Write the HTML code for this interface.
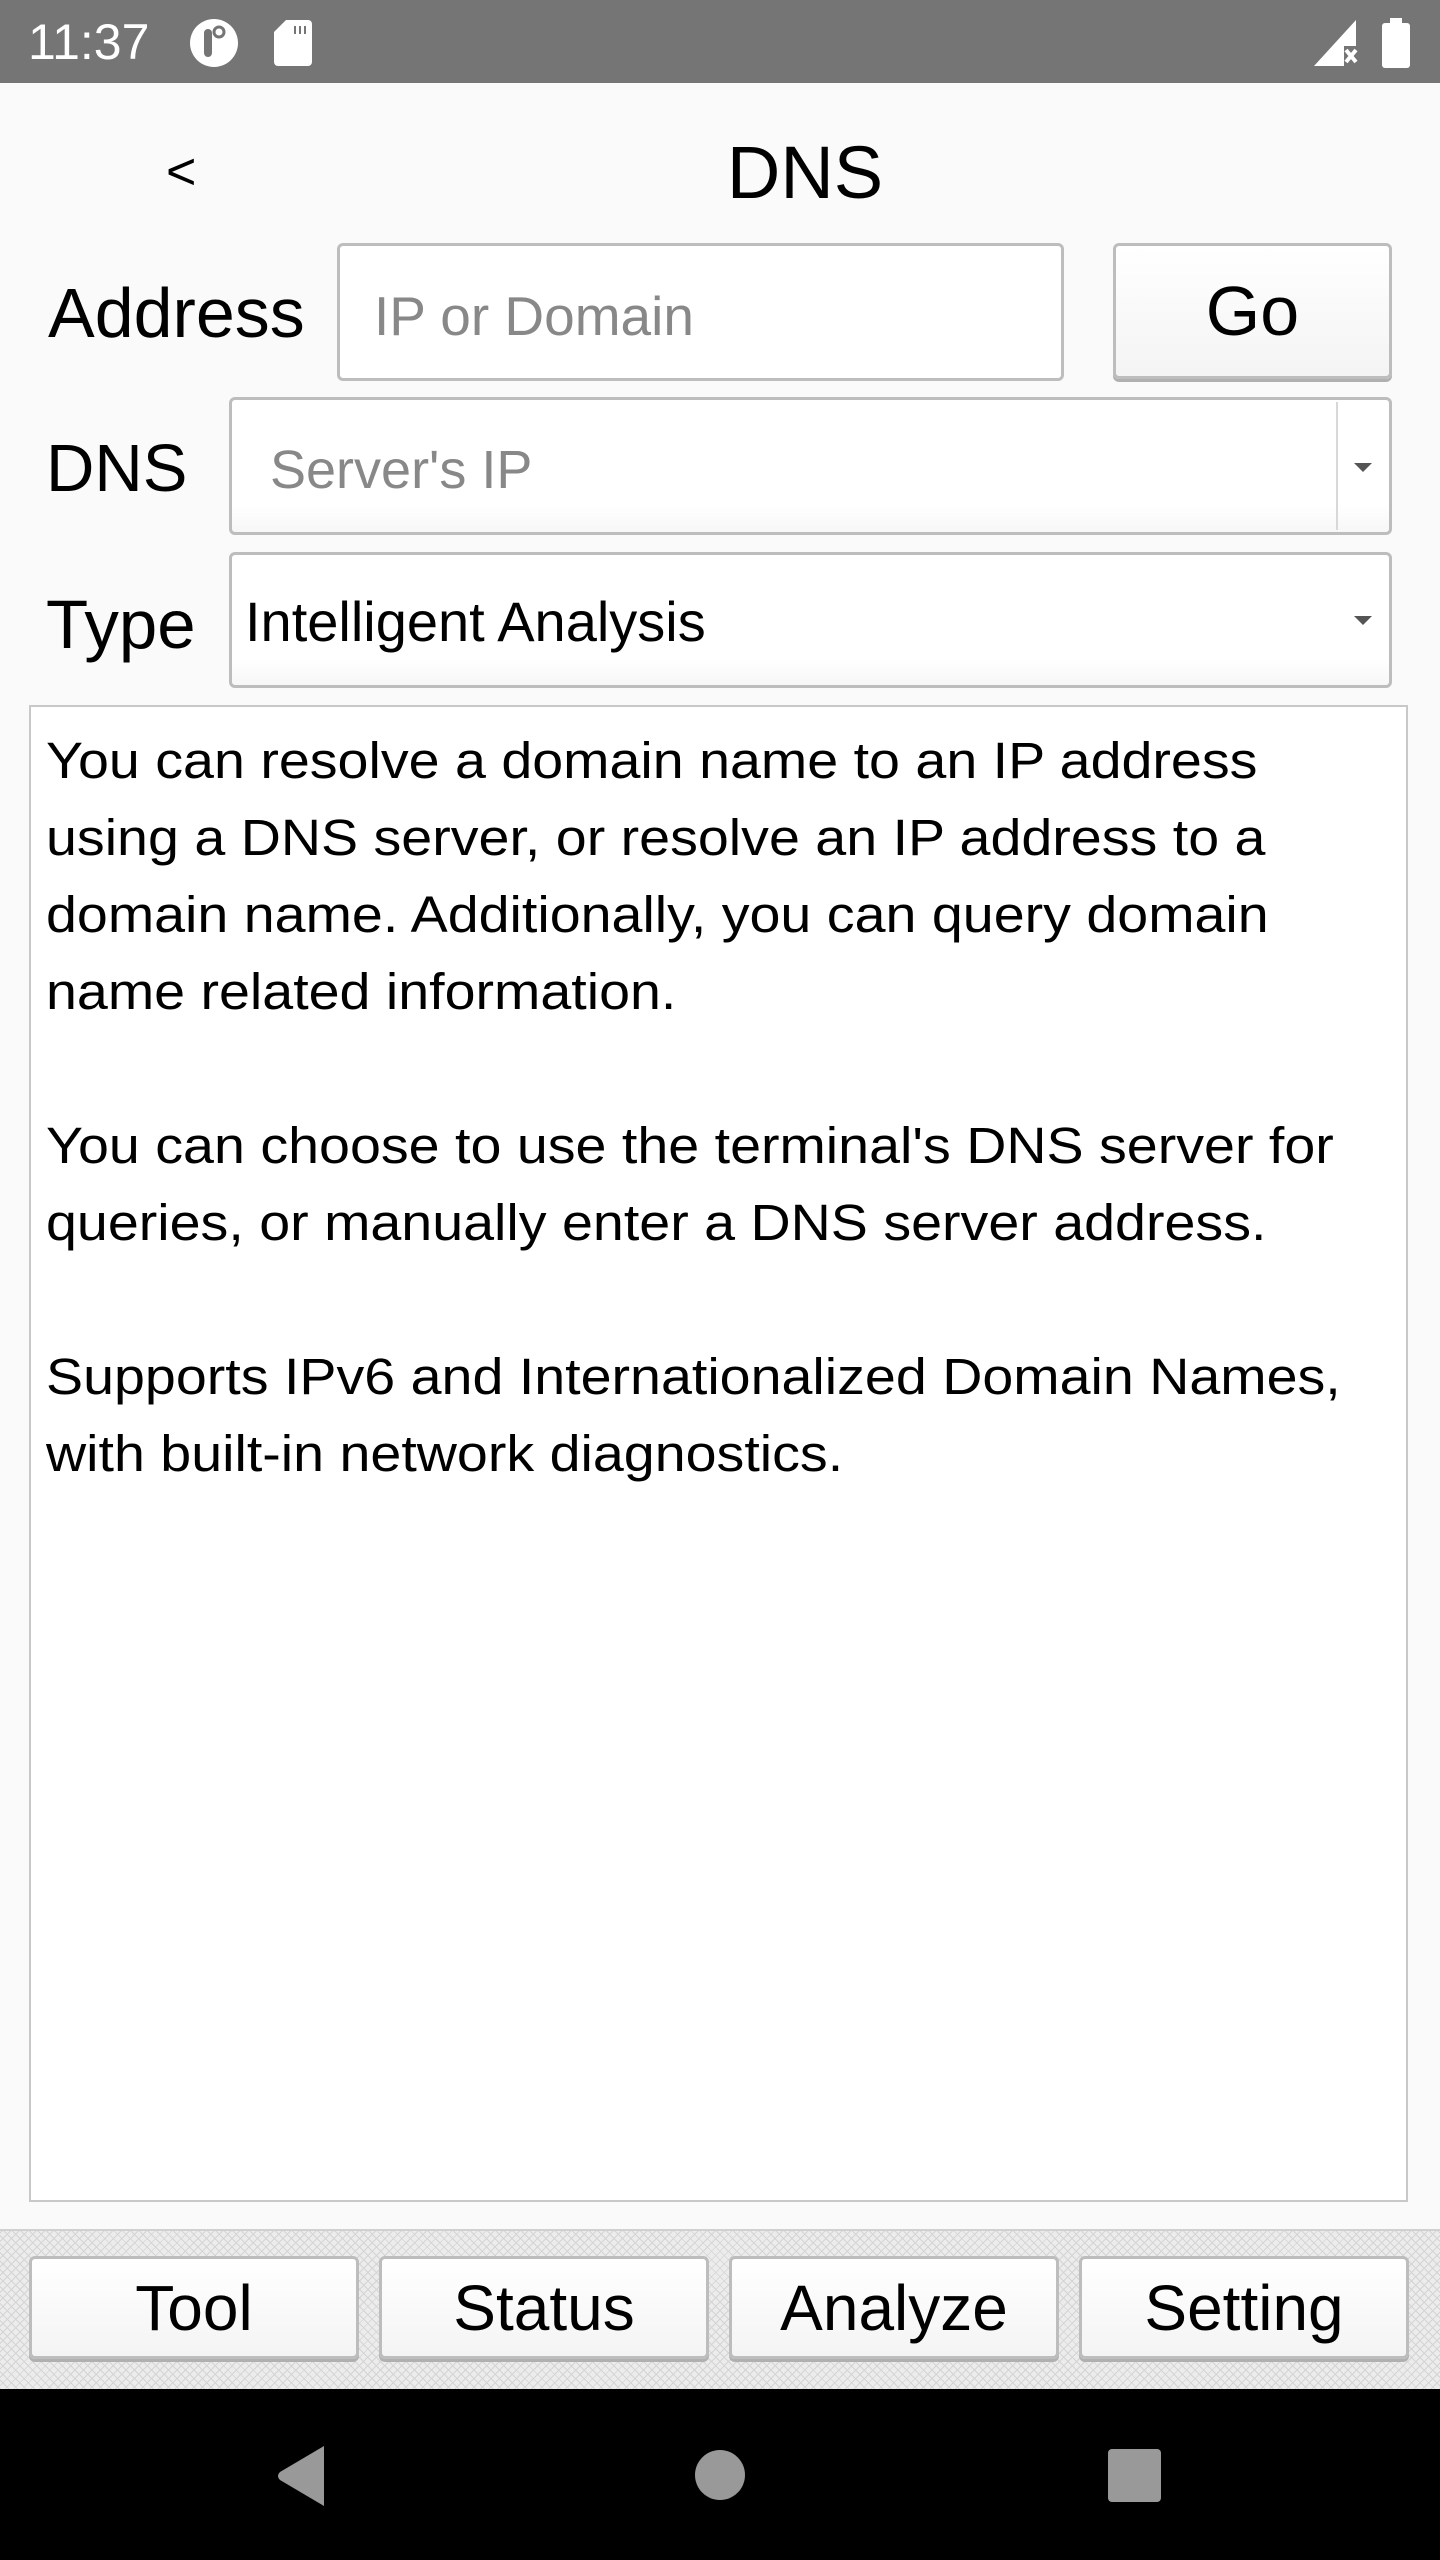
<!DOCTYPE html>
<html><head><meta charset="utf-8"><style>
*{margin:0;padding:0;box-sizing:border-box}
body{width:1440px;height:2560px;background:#fafafa;font-family:"Liberation Sans",sans-serif;position:relative;overflow:hidden;color:#000}
.a{position:absolute}
.sb{left:0;top:0;width:1440px;height:83px;background:#757575}
.box{border:3px solid #bdbdbd;border-radius:6px;background:#fff}
.btn{border:3px solid #bdbdbd;border-radius:6px;background:linear-gradient(#fff,#f4f4f4);box-shadow:0 3px 0 #b0b0b0;display:flex;align-items:center;justify-content:center}
.lbl{font-size:70px;line-height:1}
.txt{left:46px;top:722px;font-size:51px;line-height:77px;white-space:nowrap;color:#000;transform:scaleX(1.09);transform-origin:0 0}
.bar{left:0;top:2229px;width:1440px;height:160px;background-color:#ececec;background-image:repeating-linear-gradient(45deg,#d4d4d4 0 1px,transparent 1px 6px),repeating-linear-gradient(-45deg,#d4d4d4 0 1px,transparent 1px 6px);border-top:2px solid #d0d0d0}
.tb{top:2256px;height:103px;font-size:64px}
.nav{left:0;top:2389px;width:1440px;height:171px;background:#000}
.arr{width:0;height:0;border-left:9px solid transparent;border-right:9px solid transparent;border-top:9px solid #555}
</style></head><body>
<div class="a sb"></div>
<div class="a" style="left:28px;top:14px;font-size:50px;color:#fff;line-height:56px">11:37</div>
<svg class="a" style="left:188px;top:18px" width="52" height="50" viewBox="0 0 52 50"><ellipse cx="26" cy="25" rx="24" ry="24" fill="#fff"/><rect x="16" y="11" width="8" height="28" rx="4" fill="#757575"/><circle cx="31" cy="14" r="5" fill="none" stroke="#757575" stroke-width="3"/></svg>
<svg class="a" style="left:274px;top:20px" width="38" height="46" viewBox="0 0 38 46"><path d="M12 0H34a4 4 0 0 1 4 4V42a4 4 0 0 1-4 4H4a4 4 0 0 1-4-4V12Z" fill="#fff"/><rect x="20" y="6" width="2" height="8" fill="#757575"/><rect x="25" y="6" width="2" height="8" fill="#757575"/><rect x="30" y="6" width="2" height="8" fill="#757575"/></svg>
<svg class="a" style="left:1314px;top:20px" width="46" height="46" viewBox="0 0 46 46"><path d="M42 0V26H30V46H0Z" fill="#fff"/><path d="M32 30l10 12M42 30L32 42" stroke="#fff" stroke-width="4"/></svg>
<svg class="a" style="left:1382px;top:18px" width="28" height="50" viewBox="0 0 28 50"><rect x="8" y="0" width="12" height="6" fill="#fff"/><rect x="0" y="5" width="28" height="45" rx="3" fill="#fff"/></svg>

<div class="a" style="left:166px;top:142px;font-size:52px;line-height:60px">&lt;</div>
<div class="a" style="left:705px;top:128px;width:200px;text-align:center;font-size:74px;line-height:90px">DNS</div>

<div class="a lbl" style="left:48px;top:278px">Address</div>
<div class="a box" style="left:337px;top:243px;width:727px;height:138px"></div>
<div class="a" style="left:374px;top:288px;font-size:55px;color:#888;line-height:56px">IP or Domain</div>
<div class="a btn" style="left:1113px;top:243px;width:279px;height:136px;font-size:70px">Go</div>

<div class="a lbl" style="left:46px;top:435px;font-size:67px">DNS</div>
<div class="a box" style="left:229px;top:397px;width:1163px;height:138px;background:linear-gradient(#fff 80%,#f7f7f7)"></div>
<div class="a" style="left:1336px;top:402px;width:2px;height:128px;background:#d8d8d8"></div>
<div class="a arr" style="left:1354px;top:463px"></div>
<div class="a" style="left:270px;top:442px;font-size:54px;color:#888;line-height:56px">Server's IP</div>

<div class="a lbl" style="left:46px;top:590px;font-size:69px">Type</div>
<div class="a box" style="left:229px;top:552px;width:1163px;height:136px;background:linear-gradient(#fff 80%,#f7f7f7)"></div>
<div class="a arr" style="left:1354px;top:616px"></div>
<div class="a" style="left:245px;top:594px;font-size:56px;line-height:56px;color:#000">Intelligent Analysis</div>

<div class="a" style="left:29px;top:705px;width:1379px;height:1497px;background:#fff;border:2px solid #c8c8c8"></div>
<div class="a txt">You can resolve a domain name to an IP address<br>using a DNS server, or resolve an IP address to a<br>domain name. Additionally, you can query domain<br>name related information.<br><br>You can choose to use the terminal's DNS server for<br>queries, or manually enter a DNS server address.<br><br>Supports IPv6 and Internationalized Domain Names,<br>with built-in network diagnostics.</div>

<div class="a bar"></div>
<div class="a btn tb" style="left:29px;width:330px">Tool</div>
<div class="a btn tb" style="left:379px;width:330px">Status</div>
<div class="a btn tb" style="left:729px;width:330px">Analyze</div>
<div class="a btn tb" style="left:1079px;width:330px">Setting</div>

<div class="a nav"></div>
<svg class="a" style="left:276px;top:2444px" width="52" height="64" viewBox="0 0 52 64"><path d="M48 2V62L4 36Q0 32 4 28Z" fill="#999"/></svg>
<div class="a" style="left:695px;top:2450px;width:50px;height:50px;border-radius:50%;background:#999"></div>
<div class="a" style="left:1108px;top:2449px;width:53px;height:53px;border-radius:4px;background:#999"></div>
</body></html>
